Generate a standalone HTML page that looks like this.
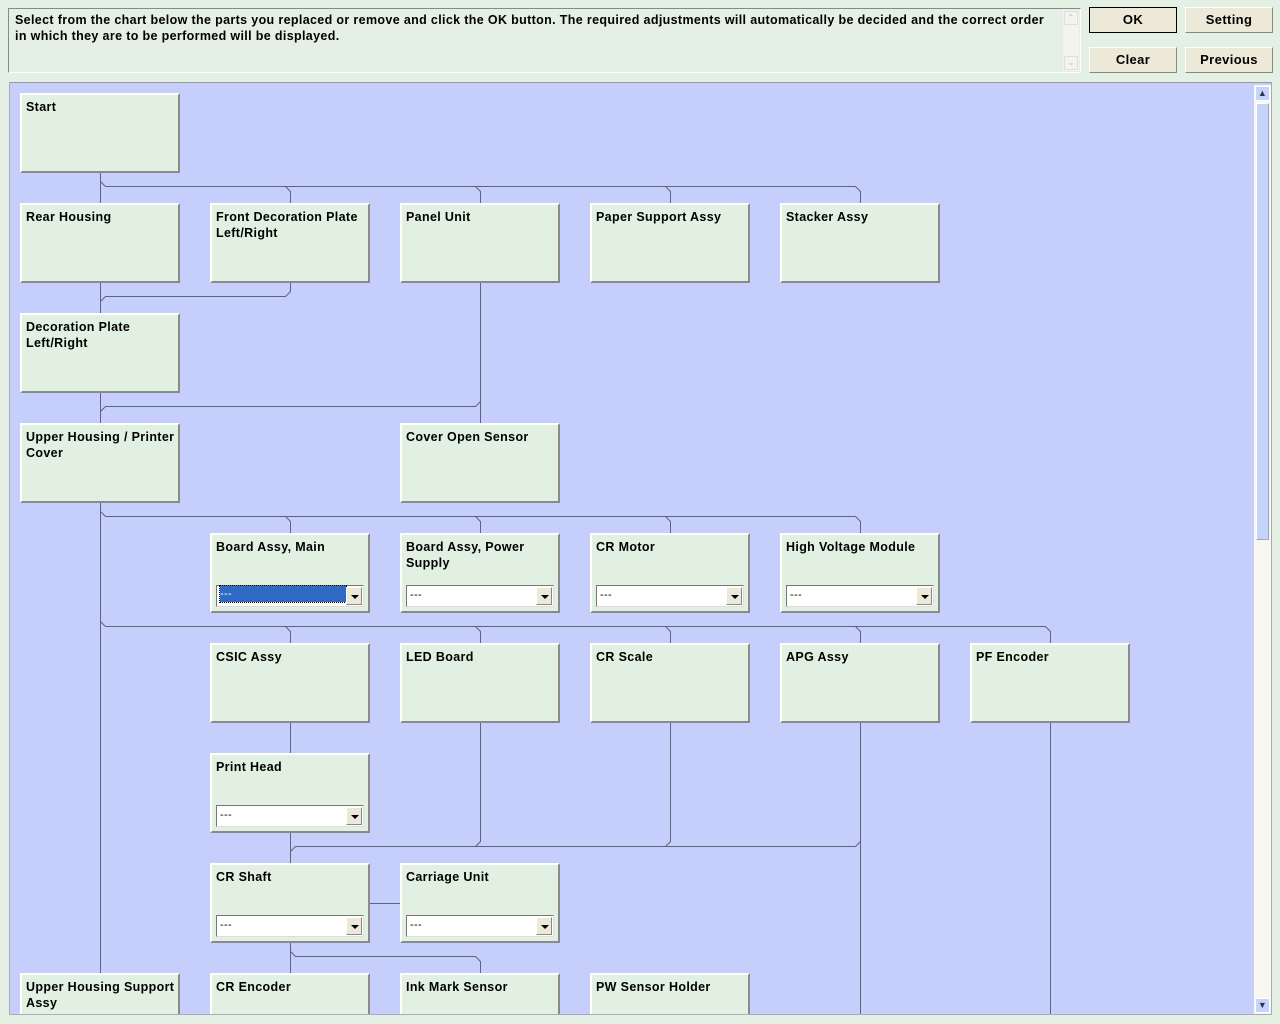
<!DOCTYPE html>
<html><head><meta charset="utf-8"><style>
*{box-sizing:border-box;margin:0;padding:0}
body{width:1280px;height:1024px;background:#e3f0e3;position:relative;overflow:hidden;font-family:"Liberation Sans",Arial,sans-serif;font-weight:bold;font-size:12.5px;color:#000;letter-spacing:0.35px}
.ta{position:absolute;left:8px;top:8px;width:1073px;height:65px;border:1px solid #888;border-right-color:#fff;border-bottom-color:#fff;background:#e3f0e3;padding:3px 22px 0 6px;line-height:16px;font-size:12.5px}
.tsb{position:absolute;right:1px;top:1px;width:16px;bottom:1px;background:#f4f4ee}
.tsb b{position:absolute;left:1px;width:14px;height:14px;border:1px solid #dde;font-size:8px;line-height:12px;text-align:center;color:#bbc;font-weight:normal}
.btn{position:absolute;width:88px;height:26px;background:#ece9d8;border:1px solid #fff;border-right-color:#888;border-bottom-color:#888;text-align:center;line-height:24px;font-size:13px}
.chart{position:absolute;left:9px;top:82px;width:1263px;height:933px;background:#c6cefc;border:1px solid #aab;border-top-color:#999;overflow:hidden}
.box{position:absolute;width:160px;height:80px;background:#e2f0e2;border:2px solid #fff;border-right-color:#8a8a8a;border-bottom-color:#8a8a8a;padding:4px 0 0 4px;line-height:16px}
.sel{position:absolute;left:4px;top:50px;width:148px;height:22px;background:#fff;border:1px solid #777;border-right-color:#ddd;border-bottom-color:#ddd;font-weight:normal;font-size:11px;line-height:18px;padding-left:3px}
.sel i{position:absolute;right:1px;top:1px;width:16px;height:18px;background:#ece9d8;border:1px solid #fff;border-right-color:#888;border-bottom-color:#888}
.sel i:after{content:"";position:absolute;left:4px;top:7px;border:4px solid transparent;border-top:4px solid #000;border-bottom:0}
.sel.hl span{display:block;background:#316ac5;color:#fff;height:16px;width:126px;outline:1px dotted #000;line-height:16px}
.sb{position:absolute;left:1244px;top:2px;width:17px;height:929px;background:#f7f6f0}
.thumb{position:absolute;left:2px;top:18px;width:13px;height:437px;background:#c4d4fb;border:1px solid;border-color:#fff #9ab #9ab #fff}
.arr{position:absolute;left:1px;width:15px;height:15px;background:#c4d4fb;border:1px solid #fff;font-size:9px;line-height:13px;text-align:center;color:#334}
</style></head><body>
<div class="ta">Select from the chart below the parts you replaced or remove and click the OK button. The required adjustments will automatically be decided and the correct order in which they are to be performed will be displayed.<div class="tsb"><b style="top:1px">&#8963;</b><b style="bottom:1px">&#8964;</b></div></div>
<div class="btn" style="left:1089px;top:7px;border:1px solid #000">OK</div>
<div class="btn" style="left:1185px;top:7px">Setting</div>
<div class="btn" style="left:1089px;top:47px">Clear</div>
<div class="btn" style="left:1185px;top:47px">Previous</div>
<div class="chart">
<svg width="1263" height="933" style="position:absolute;left:-10px;top:-83px;overflow:visible" stroke="#5d6578" stroke-width="1" fill="none">
<g transform="translate(0.5,0.5)">
<path d="M100 172V203M100 181L105 186H285L290 191V203M285 186H475L480 191V203M475 186H665L670 191V203M665 186H855L860 191V203"/>
<path d="M100 282V313M290 282V291L285 296H105L100 301"/>
<path d="M100 392V423M480 282V423M480 401L475 406H105L100 411"/>
<path d="M100 502V1014M100 511L105 516H285L290 521V533M285 516H475L480 521V533M475 516H665L670 521V533M665 516H855L860 521V533"/>
<path d="M100 621L105 626H285L290 631V643M285 626H475L480 631V643M475 626H665L670 631V643M665 626H855L860 631V643M855 626H1045L1050 631V643"/>
<path d="M290 722V753M290 832V863M480 722V841L475 846M670 722V841L665 846M860 722V1014M860 841L855 846H295L290 851M1050 722V1014"/>
<path d="M369 903H400M290 942V973M290 951L295 956H475L480 961V973"/>
</g></svg>
<div class="box" style="left:10px;top:10px">Start</div>
<div class="box" style="left:10px;top:120px">Rear Housing</div>
<div class="box" style="left:200px;top:120px">Front Decoration Plate Left/Right</div>
<div class="box" style="left:390px;top:120px">Panel Unit</div>
<div class="box" style="left:580px;top:120px">Paper Support Assy</div>
<div class="box" style="left:770px;top:120px">Stacker Assy</div>
<div class="box" style="left:10px;top:230px">Decoration Plate Left/Right</div>
<div class="box" style="left:10px;top:340px">Upper Housing / Printer Cover</div>
<div class="box" style="left:390px;top:340px">Cover Open Sensor</div>
<div class="box" style="left:200px;top:450px">Board Assy, Main<div class="sel hl"><span>---</span><i></i></div></div>
<div class="box" style="left:390px;top:450px">Board Assy, Power Supply<div class="sel">---<i></i></div></div>
<div class="box" style="left:580px;top:450px">CR Motor<div class="sel">---<i></i></div></div>
<div class="box" style="left:770px;top:450px">High Voltage Module<div class="sel">---<i></i></div></div>
<div class="box" style="left:200px;top:560px">CSIC Assy</div>
<div class="box" style="left:390px;top:560px">LED Board</div>
<div class="box" style="left:580px;top:560px">CR Scale</div>
<div class="box" style="left:770px;top:560px">APG Assy</div>
<div class="box" style="left:960px;top:560px">PF Encoder</div>
<div class="box" style="left:200px;top:670px">Print Head<div class="sel">---<i></i></div></div>
<div class="box" style="left:200px;top:780px">CR Shaft<div class="sel">---<i></i></div></div>
<div class="box" style="left:390px;top:780px">Carriage Unit<div class="sel">---<i></i></div></div>
<div class="box" style="left:10px;top:890px">Upper Housing Support Assy</div>
<div class="box" style="left:200px;top:890px">CR Encoder</div>
<div class="box" style="left:390px;top:890px">Ink Mark Sensor</div>
<div class="box" style="left:580px;top:890px">PW Sensor Holder</div>
<div class="sb"><div class="arr" style="top:1px">&#9650;</div><div class="thumb"></div><div class="arr" style="bottom:1px">&#9660;</div></div>
</div>
</body></html>
